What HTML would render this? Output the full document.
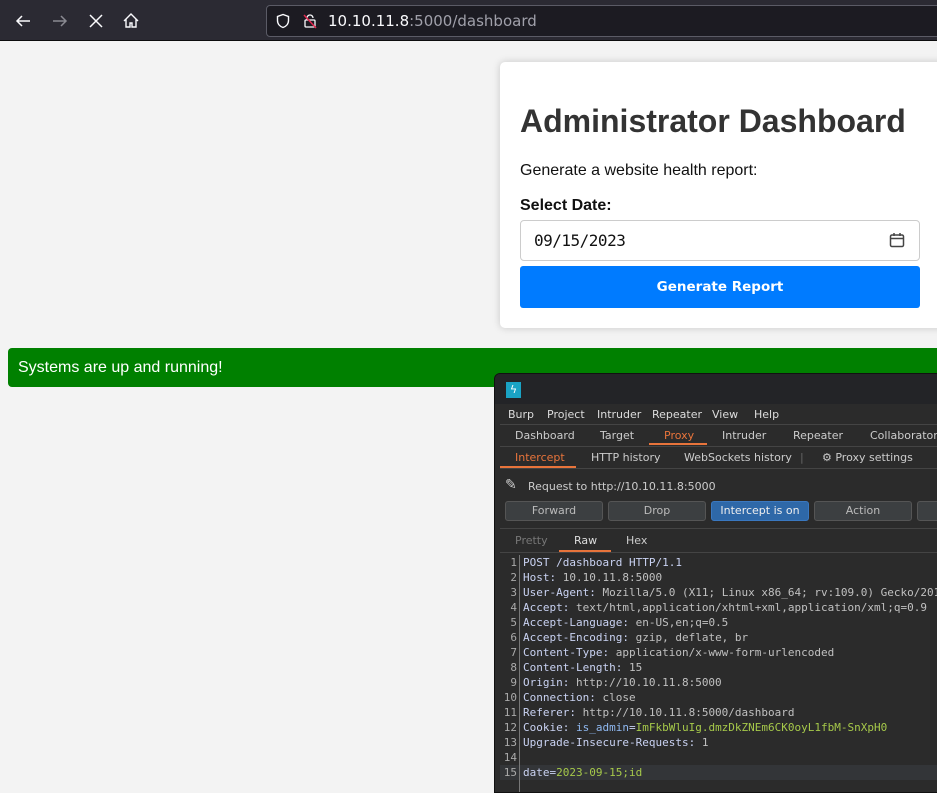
<!DOCTYPE html>
<html><head><style>
*{margin:0;padding:0;box-sizing:border-box}
body{width:937px;height:786px;overflow:hidden;background:#f3f3f3;font-family:"Liberation Sans",sans-serif;position:relative}
.tb{position:absolute;left:0;top:0;width:937px;height:41px;background:#2b2a33;border-bottom:1px solid #0c0c0d}
.url{position:absolute;left:266px;top:5px;width:680px;height:32px;background:#1c1b22;border:1px solid #5b5b66;border-radius:4px}
.ab{position:absolute;font-family:"DejaVu Sans",sans-serif}
.card{position:absolute;left:500px;top:62px;width:450px;height:266px;background:#fff;border-radius:5px;box-shadow:0 0 8px rgba(0,0,0,.18)}
h1{position:absolute;left:20px;top:41px;font-size:32px;color:#333;font-weight:bold;white-space:nowrap}
.p{position:absolute;left:20px;top:100px;font-size:16px;color:#111}
.lb{position:absolute;left:20px;top:135px;font-size:16px;font-weight:bold;color:#111}
.inp{position:absolute;left:20px;top:158px;width:400px;height:41px;border:1px solid #ccc;border-radius:4px;font-family:"DejaVu Sans Mono",monospace;font-size:16px;padding:10px 0 0 13px;color:#111;letter-spacing:-0.5px}
.btn{position:absolute;left:20px;top:204px;width:400px;height:42px;background:#007bff;border-radius:3px;color:#fff;font-family:"DejaVu Sans",sans-serif;font-weight:bold;font-size:13.5px;text-align:center;line-height:42px}
.green{position:absolute;left:8px;top:348px;width:940px;height:39px;background:#008000;border-radius:4px;color:#fff;font-size:16px;padding:11px 10px}
.burp{position:absolute;left:494px;top:373px;width:450px;height:420px;background:#2b2b2b;border:1px solid #111;border-radius:6px 0 0 0;font-family:"DejaVu Sans",sans-serif;font-size:11px;color:#ddd;overflow:hidden}
.ttl{height:30px;background:#232427;position:relative}
.row{position:absolute;left:5px;white-space:nowrap}
.row span{position:absolute}
.line{position:absolute;left:5px;width:440px;height:1px;background:#444}
.bt{position:absolute;top:127px;height:20px;width:98px;background:#3c3f41;border:1px solid #555;border-radius:3px;text-align:center;line-height:18px;color:#bbb}
.code{position:absolute;left:5px;top:181px;font-family:"DejaVu Sans Mono",monospace;font-size:11px;line-height:15px;width:440px}
.code div{white-space:nowrap;height:15px}
.n{display:inline-block;width:20px;text-align:right;color:#aaa;margin-right:3px;border-right:1px solid #777;padding-right:2px}
.k{color:#c9d2f2}.v{color:#c0c0c0}.g{color:#a6c94a}
</style></head><body>
<div class="tb">
<svg class="ab" style="left:14px;top:12px" width="18" height="18" viewBox="0 0 18 18" fill="none" stroke="#fbfbfe" stroke-width="1.5"><path d="M16 9H3M8 4L3 9l5 5"/></svg>
<svg class="ab" style="left:51px;top:12px" width="18" height="18" viewBox="0 0 18 18" fill="none" stroke="#8a8a92" stroke-width="1.5"><path d="M2 9h13M10 4l5 5-5 5"/></svg>
<svg class="ab" style="left:87px;top:12px" width="18" height="18" viewBox="0 0 18 18" fill="none" stroke="#fbfbfe" stroke-width="1.5"><path d="M3 3l12 12M15 3L3 15"/></svg>
<svg class="ab" style="left:122px;top:12px" width="18" height="18" viewBox="0 0 18 18" fill="none" stroke="#fbfbfe" stroke-width="1.4"><path d="M2 9L9 2l7 7M4 7v8h4v-4h2v4h4V7"/></svg>
<div class="url">
<svg class="ab" style="left:8px;top:7px" width="16" height="16" viewBox="0 0 16 16" fill="none" stroke="#fbfbfe" stroke-width="1.4"><path d="M8 1.5L2.5 3.5v4c0 3.5 2.5 6 5.5 7 3-1 5.5-3.5 5.5-7v-4z"/></svg>
<svg class="ab" style="left:35px;top:7px" width="16" height="16" viewBox="0 0 16 16" fill="none" stroke="#fbfbfe" stroke-width="1.3"><rect x="3" y="7" width="10" height="7" rx="1"/><path d="M5 7V5a3 3 0 016 0"/><path d="M2 2l12 13" stroke="#e22850" stroke-width="1.5"/></svg>
<div class="ab" style="left:61px;top:6px;font-size:15px;color:#fbfbfe">10.10.11.8<span style="color:#a0a0aa">:5000/dashboard</span></div>
</div>
</div>
<div class="card">
<h1>Administrator Dashboard</h1>
<div class="p">Generate a website health report:</div>
<div class="lb">Select Date:</div>
<div class="inp">09/15/2023
<svg style="position:absolute;right:14px;top:11px" width="16" height="16" viewBox="0 0 16 16" fill="none" stroke="#444" stroke-width="1.5"><rect x="1.5" y="3" width="13" height="11.5" rx="1.5"/><path d="M1.5 6.5h13M5 1v3M11 1v3"/></svg></div>
<div class="btn">Generate Report</div>
</div>
<div class="green">Systems are up and running!</div>
<div class="burp">
<div class="ttl"><div style="position:absolute;left:11px;top:8px;width:15px;height:16px;background:#1aa3c4;color:#fff;font-size:11px;text-align:center;line-height:16px">ϟ</div></div>
<div class="row" style="top:34px;color:#ddd"><span style="left:8px">Burp</span><span style="left:47px">Project</span><span style="left:97px">Intruder</span><span style="left:152px">Repeater</span><span style="left:212px">View</span><span style="left:254px">Help</span></div>
<div class="line" style="top:50px"></div>
<div class="row" style="top:55px;color:#ccc"><span style="left:15px">Dashboard</span><span style="left:100px">Target</span><span style="left:164px;color:#e8743b">Proxy</span><span style="left:222px">Intruder</span><span style="left:293px">Repeater</span><span style="left:370px">Collaborator</span></div>
<div style="position:absolute;left:154px;top:69px;width:58px;height:2px;background:#e8743b"></div>
<div class="line" style="top:72px"></div>
<div class="row" style="top:77px;color:#ccc"><span style="left:15px;color:#e8743b">Intercept</span><span style="left:91px">HTTP history</span><span style="left:184px">WebSockets history</span><span style="left:300px;color:#666">|</span><span style="left:322px">⚙ Proxy settings</span></div>
<div style="position:absolute;left:5px;top:92px;width:76px;height:2px;background:#e8743b"></div>
<div class="line" style="top:94px"></div>
<div class="row" style="top:106px;color:#ccc"><span style="left:5px;font-size:14px;top:-3px">✎</span><span style="left:28px">Request to http://10.10.11.8:5000</span></div>
<div class="bt" style="left:10px">Forward</div><div class="bt" style="left:113px">Drop</div><div class="bt" style="left:216px;background:#2e68a8;border-color:#3a78c0;color:#eee">Intercept is on</div><div class="bt" style="left:319px">Action</div><div class="bt" style="left:422px">O</div>
<div class="line" style="top:154px"></div>
<div class="row" style="top:160px"><span style="left:15px;color:#777">Pretty</span><span style="left:74px;color:#ddd">Raw</span><span style="left:126px;color:#ccc">Hex</span></div>
<div style="position:absolute;left:64px;top:176px;width:52px;height:2px;background:#e8743b"></div>
<div class="line" style="top:178px"></div>
<div class="code">
<div><span class="n">1</span><span class="k">POST /dashboard HTTP/1.1</span></div>
<div><span class="n">2</span><span class="k">Host:</span> <span class="v">10.10.11.8:5000</span></div>
<div><span class="n">3</span><span class="k">User-Agent:</span> <span class="v">Mozilla/5.0 (X11; Linux x86_64; rv:109.0) Gecko/2010</span></div>
<div><span class="n">4</span><span class="k">Accept:</span> <span class="v">text/html,application/xhtml+xml,application/xml;q=0.9</span></div>
<div><span class="n">5</span><span class="k">Accept-Language:</span> <span class="v">en-US,en;q=0.5</span></div>
<div><span class="n">6</span><span class="k">Accept-Encoding:</span> <span class="v">gzip, deflate, br</span></div>
<div><span class="n">7</span><span class="k">Content-Type:</span> <span class="v">application/x-www-form-urlencoded</span></div>
<div><span class="n">8</span><span class="k">Content-Length:</span> <span class="v">15</span></div>
<div><span class="n">9</span><span class="k">Origin:</span> <span class="v">http://10.10.11.8:5000</span></div>
<div><span class="n">10</span><span class="k">Connection:</span> <span class="v">close</span></div>
<div><span class="n">11</span><span class="k">Referer:</span> <span class="v">http://10.10.11.8:5000/dashboard</span></div>
<div><span class="n">12</span><span class="k">Cookie:</span> <span style="color:#8fb8f0">is_admin</span><span class="k">=</span><span class="g">ImFkbWluIg.dmzDkZNEm6CK0oyL1fbM-SnXpH0</span></div>
<div><span class="n">13</span><span class="k">Upgrade-Insecure-Requests:</span> <span class="v">1</span></div>
<div><span class="n">14</span></div>
<div style="background:#333538"><span class="n">15</span><span class="k">date=</span><span class="g">2023-09-15;id</span></div>
<div><span class="n">&nbsp;</span></div>
</div>
</div>
</body></html>
